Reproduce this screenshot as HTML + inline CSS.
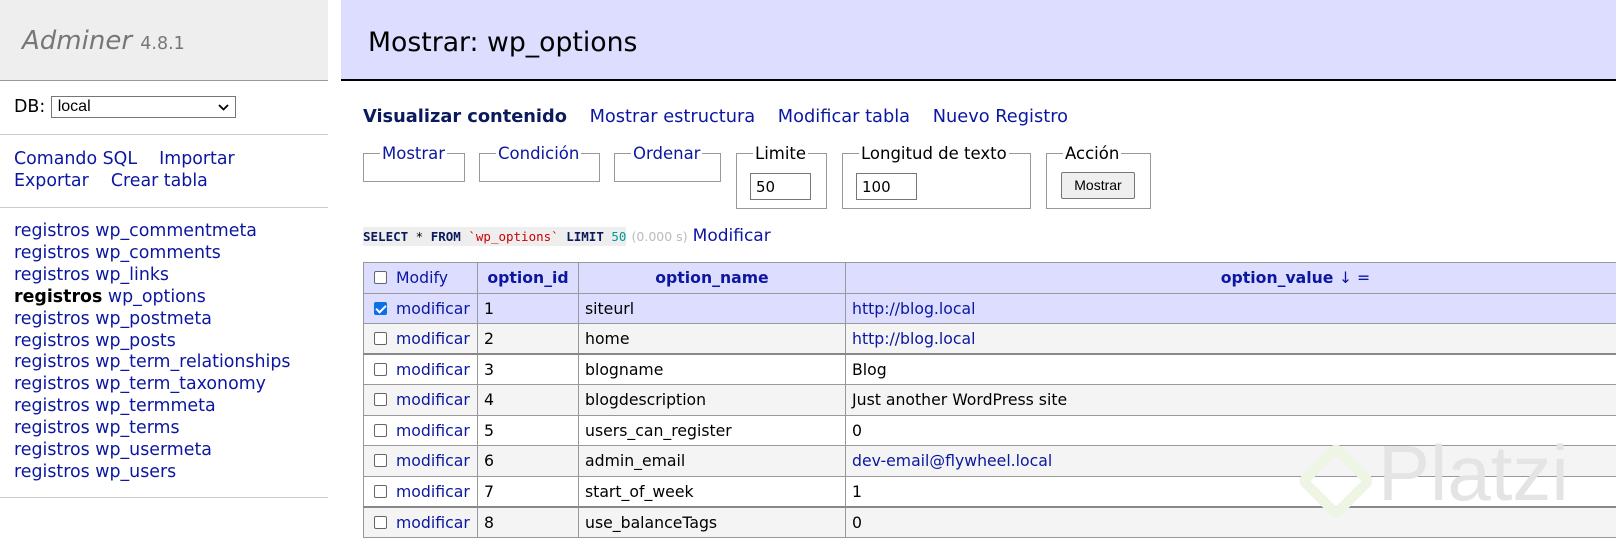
<!DOCTYPE html>
<html><head><meta charset="utf-8"><style>
*{box-sizing:border-box}
body{margin:0;width:1616px;height:533px;overflow:hidden;background:#fff;font-family:"DejaVu Sans","Liberation Sans",sans-serif;font-size:16px;color:#000;position:relative}
a{color:#0b17a0;text-decoration:none}
.abs{position:absolute;white-space:nowrap}
#sh{left:0;top:0;width:328px;height:81px;background:#eee;border-bottom:1px solid #999}
#mh{left:341px;top:0;width:1275px;height:81px;background:#ddf;border-bottom:2px solid #000}
.hr{position:absolute;left:0;width:328px;height:1px;background:#ccc}
fieldset{position:absolute;border:1px solid #999;margin:0;padding:0 8px;height:58px}
legend{padding:0 2px;font-size:16.5px;margin-left:8px}
input.t{position:absolute;height:27px;border:1px solid #767676;font-size:15px;padding:2px 5px;font-family:"DejaVu Sans",sans-serif}
table{position:absolute;left:363px;top:262px;border-collapse:collapse;table-layout:fixed;width:1382px}
td,th{border:1px solid #999;height:30.5px;padding:0 6px;font-weight:normal;text-align:left;font-size:15.7px;white-space:nowrap;overflow:hidden}
th{background:#ddf;color:#0b17a0;font-weight:bold;text-align:center}
tr.o td{background:#f4f4f4}
tr.sel td{background:#ddf}
tr.b td{border-top:2px solid #888}
.cb{display:inline-block;width:13px;height:13px;border:1px solid #666;border-radius:2px;vertical-align:-1px;margin:0 9px 0 4px;background:#fff}
.cb.on{background:#0b6fe8;border-color:#0b6fe8;position:relative}
.cb.on:after{content:"";position:absolute;left:3px;top:0px;width:4px;height:8px;border:solid #fff;border-width:0 2px 2px 0;transform:rotate(45deg)}
.side{font-size:17.4px}
</style></head><body>
<div id="sh" class="abs"></div>
<div class="abs" style="left:22px;top:26px;font-size:26px;color:#777;font-style:italic">Adminer <span style="font-style:normal;font-size:17.5px;color:#777">4.8.1</span></div>
<div id="mh" class="abs"></div>
<div class="abs" style="left:368px;top:27px;font-size:26.7px">Mostrar: wp_options</div>

<div class="abs side" style="left:14px;top:96px">DB: <span style="display:inline-block;width:185px;height:22px;border:1px solid #767676;font-family:'Liberation Sans',sans-serif;font-size:16px;padding:1px 6px;vertical-align:middle;position:relative">local<svg style="position:absolute;right:6px;top:7px" width="11" height="7" viewBox="0 0 11 7"><path d="M1 1 L5.5 5.5 L10 1" fill="none" stroke="#000" stroke-width="1.8"/></svg></span></div>
<div class="hr" style="top:134px"></div>
<div class="abs side" style="left:14px;top:148px;line-height:22px"><a>Comando SQL</a>&nbsp;&nbsp;&nbsp; <a>Importar</a><br><a>Exportar</a>&nbsp;&nbsp;&nbsp; <a>Crear tabla</a></div>
<div class="hr" style="top:207px"></div>
<div class="abs side" style="left:14px;top:221px;line-height:21.9px">
<a>registros</a> <a>wp_commentmeta</a><br><a>registros</a> <a>wp_comments</a><br><a>registros</a> <a>wp_links</a><br><b>registros</b> <a>wp_options</a><br><a>registros</a> <a>wp_postmeta</a><br><a>registros</a> <a>wp_posts</a><br><a>registros</a> <a>wp_term_relationships</a><br><a>registros</a> <a>wp_term_taxonomy</a><br><a>registros</a> <a>wp_termmeta</a><br><a>registros</a> <a>wp_terms</a><br><a>registros</a> <a>wp_usermeta</a><br><a>registros</a> <a>wp_users</a></div>
<div class="hr" style="top:497px"></div>

<div class="abs" style="left:363px;top:106px;font-size:17.8px"><b style="color:#0b1a5c">Visualizar contenido</b>&nbsp;&nbsp;&nbsp; <a>Mostrar estructura</a>&nbsp;&nbsp;&nbsp; <a>Modificar tabla</a>&nbsp;&nbsp;&nbsp; <a>Nuevo Registro</a></div>

<fieldset style="left:363px;top:144px;width:102px;height:38px"><legend><a>Mostrar</a></legend></fieldset>
<fieldset style="left:479px;top:144px;width:121px;height:38px"><legend><a>Condición</a></legend></fieldset>
<fieldset style="left:614px;top:144px;width:107px;height:38px"><legend><a>Ordenar</a></legend></fieldset>
<fieldset style="left:736px;top:144px;width:91px;height:65px"><legend>Limite</legend></fieldset>
<fieldset style="left:842px;top:144px;width:189px;height:65px"><legend>Longitud de texto</legend></fieldset>
<fieldset style="left:1046px;top:144px;width:105px;height:65px"><legend>Acción</legend></fieldset>
<input class="t" style="left:750px;top:173px;width:61px" value="50">
<input class="t" style="left:856px;top:173px;width:61px" value="100">
<div class="abs" style="left:1061px;top:172px;width:74px;height:27px;background:#efefef;border:1px solid #767676;border-radius:2px;font-family:'Liberation Sans',sans-serif;font-size:14px;text-align:center;line-height:25px">Mostrar</div>

<div class="abs" style="left:363px;top:226px"><span style="background:#eee;font-family:'DejaVu Sans Mono',monospace;font-size:12.5px;padding:2px 0"><b style="color:#0b1a5c">SELECT</b> * <b style="color:#0b1a5c">FROM</b> <span style="color:#c00">`wp_options`</span> <b style="color:#0b1a5c">LIMIT</b> <span style="color:#099">50</span></span> <span style="color:#bbb;font-size:12.5px">(0.000 s)</span> <a style="font-size:17px">Modificar</a></div>

<table>
<colgroup><col style="width:114px"><col style="width:101px"><col style="width:267px"><col style="width:900px"></colgroup>
<tr><th style="text-align:left;font-weight:normal;padding-left:6px"><span class="cb" style="margin-left:4px"></span>Modify</th><th>option_id</th><th>option_name</th><th>option_value <span style="font-weight:normal">↓ =</span></th></tr>
<tr class="sel"><td><span class="cb on"></span><a>modificar</a></td><td>1</td><td>siteurl</td><td><a>http://blog.local</a></td></tr>
<tr class="o"><td><span class="cb"></span><a>modificar</a></td><td>2</td><td>home</td><td><a>http://blog.local</a></td></tr>
<tr class="b"><td><span class="cb"></span><a>modificar</a></td><td>3</td><td>blogname</td><td>Blog</td></tr>
<tr class="o"><td><span class="cb"></span><a>modificar</a></td><td>4</td><td>blogdescription</td><td>Just another WordPress site</td></tr>
<tr><td><span class="cb"></span><a>modificar</a></td><td>5</td><td>users_can_register</td><td>0</td></tr>
<tr class="o"><td><span class="cb"></span><a>modificar</a></td><td>6</td><td>admin_email</td><td><a>dev-email@flywheel.local</a></td></tr>
<tr><td><span class="cb"></span><a>modificar</a></td><td>7</td><td>start_of_week</td><td>1</td></tr>
<tr class="o b"><td><span class="cb"></span><a>modificar</a></td><td>8</td><td>use_balanceTags</td><td>0</td></tr>
</table>
<div class="abs" style="left:1378px;top:428px;font-size:78px;color:#e4e4e4;font-family:'Liberation Sans',sans-serif">Platzi</div>
<div class="abs" style="left:1308px;top:453px;width:56px;height:56px;border:10px solid #eef5e4;transform:rotate(45deg);border-radius:8px"></div>
</body></html>
